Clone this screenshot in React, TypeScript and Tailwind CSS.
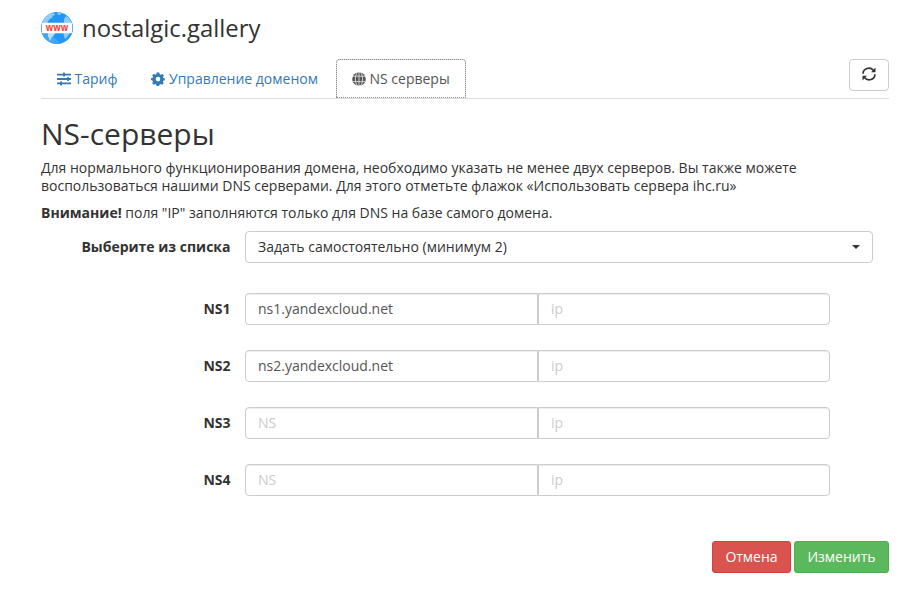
import type { ReactNode } from "react";

const servers = [
  { label: "NS1", value: "ns1.yandexcloud.net" },
  { label: "NS2", value: "ns2.yandexcloud.net" },
  { label: "NS3", value: "" },
  { label: "NS4", value: "" },
];

function WwwLogo() {
  return (
    <svg viewBox="0 0 32 32" className="h-8 w-8 shrink-0">
      <defs>
        <clipPath id="globe">
          <circle cx="16" cy="16" r="16" />
        </clipPath>
      </defs>
      <g clipPath="url(#globe)">
        <rect width="32" height="32" fill="#2196f3" />
        <path d="M0 32V12L20 32Z" fill="#42a5f5" />
        <path d="M0 13 3 6l5-4 5-1 1 2-3 1 1 1-3 2-2 2-1 4Z" fill="#90caf9" />
        <path d="m17 0 4 1-2 2-3-1Z" fill="#90caf9" />
        <path d="m23 7 2-3 3 2 4 7H22l1-3Z" fill="#90caf9" />
        <path d="M7 20h6l1 2-3 3-2 4-2-5Z" fill="#bbdefb" />
        <path d="M22 20h7l-2 4-3 3-1-3Z" fill="#90caf9" />
        <path d="M0 13V20h1v-7ZM31 12v8h1v-8Z" fill="#64b5f6" />
      </g>
      <rect x="1" y="10.8" width="30" height="10.4" rx="1" fill="#fff" />
      <text x="16" y="18.8" textAnchor="middle" textLength="22.5" lengthAdjust="spacingAndGlyphs" fontSize="10" fontWeight="700" fill="#f44336" fontFamily="'Open Sans', sans-serif">
        www
      </text>
    </svg>
  );
}

function SlidersIcon() {
  return (
    <svg viewBox="0 0 14 14" className="h-[14px] w-[14px]" fill="currentColor">
      <path d="M0 1.7h14v1.8H0zM0 6.1h14v1.8H0zM0 10.5h14v1.8H0z" />
      <rect x="6" y=".6" width="2" height="4" rx=".4" />
      <rect x="10" y="5" width="2" height="4" rx=".4" />
      <rect x="3" y="9.4" width="2" height="4" rx=".4" />
    </svg>
  );
}

function CogIcon() {
  return (
    <svg viewBox="0 0 14 14" className="h-[14px] w-[14px]" fill="currentColor">
      <path
        fillRule="evenodd"
        d="M5.7.4h2.6l.4 1.8 1 .5 1.7-.8 1.5 1.7-.9 1.6.3.8 1.5.3v1.9l-1.6.5-.4.9.9 1.6-1.6 1.6-1.6-.8-.9.4-.5 1.8H5.7l-.5-1.8-.9-.4-1.6.8-1.5-1.6.8-1.6-.4-.9L0 8V6.2l1.6-.4.4-1-.8-1.5 1.5-1.5 1.6.9.9-.5ZM7 4.8a2.3 2.3 0 1 0 0 4.6 2.3 2.3 0 0 0 0-4.6Z"
      />
    </svg>
  );
}

function GlobeIcon() {
  return (
    <svg viewBox="0 0 14 14" className="h-[14px] w-[14px]">
      <circle cx="7" cy="7" r="6.8" fill="currentColor" />
      <g fill="none" stroke="#fff" strokeWidth=".7">
        <path d="M1 4.2h12M1 9.6h12M7 0v14" />
        <ellipse cx="7" cy="7" rx="3.6" ry="7.4" />
      </g>
    </svg>
  );
}

function RefreshIcon() {
  return (
    <svg viewBox="0 0 14 14" className="mb-[2px] h-[14px] w-[14px]">
      <g fill="none" stroke="currentColor" strokeWidth="1.7">
        <path d="M1.1 6.7A5.8 5.4 0 0 1 11.4 3.2" />
        <path d="M12.9 7.3A5.8 5.4 0 0 1 2.6 10.8" />
      </g>
      <path d="M13.5 .6v4.6H9ZM.5 13.4V8.8H5Z" fill="currentColor" />
    </svg>
  );
}

function Tab({ icon, active, children }: { icon: ReactNode; active?: boolean; children: ReactNode }) {
  return (
    <a
      className={
        "mr-[2px] flex h-[39px] items-center gap-[3.5px] rounded-t-[4px] border px-[15px] text-[14px] leading-5 " +
        (active
          ? "border-[#ddd] border-b-transparent bg-white text-[#555] outline-1 -outline-offset-1 outline-dotted outline-[#888]"
          : "border-transparent text-[#337ab7]")
      }
    >
      {icon}
      <span className="whitespace-nowrap">{children}</span>
    </a>
  );
}

export default function App() {
  return (
    <main className="h-[607px] overflow-hidden bg-white pl-[41px] pr-4 pt-3 font-['Open_Sans','Noto_Sans',sans-serif] text-[14px] leading-[18px] text-[#333]">
      <header className="flex h-8 items-center gap-[9px]">
        <WwwLogo />
        <span className="text-[23.9px] leading-8">nostalgic.gallery</span>
      </header>

      <nav className="mt-[15px] flex h-10 items-end justify-between border-b border-[#ddd]">
        <div className="flex">
          <Tab icon={<SlidersIcon />}>Тариф</Tab>
          <Tab icon={<CogIcon />}>Управление доменом</Tab>
          <Tab active icon={<GlobeIcon />}>NS серверы</Tab>
        </div>
        <button className="mb-[7px] flex h-8 w-10 items-center justify-center rounded-[4px] border border-[#ccc] bg-white">
          <RefreshIcon />
        </button>
      </nav>

      <h1 className="mt-[18px] text-[30px] leading-[33px]">NS-серверы</h1>
      <p className="mt-[9px] w-[800px]">
        Для нормального функционирования домена, необходимо указать не менее двух серверов. Вы также можете
        <br />
        воспользоваться нашими DNS серверами. Для этого отметьте флажок «Использовать сервера ihc.ru»
      </p>
      <p className="mt-[9px]">
        <b>Внимание!</b> поля "IP" заполняются только для DNS на базе самого домена.
      </p>

      <div className="mt-[9px] flex items-center">
        <b className="w-[189.5px] text-right">Выберите из списка</b>
        <button className="ml-[14.5px] flex h-8 w-[628px] items-center justify-between rounded-[4px] border border-[#ccc] px-3 text-left">
          <span>Задать самостоятельно (минимум 2)</span>
          <span className="border-x-4 border-t-4 border-x-transparent border-t-[#333]" />
        </button>
      </div>

      <div className="mt-[30px] flex flex-col gap-[25px]">
        {servers.map((s) => (
          <div key={s.label} className="flex h-8 items-center">
            <b className="w-[189.5px] text-right">{s.label}</b>
            <input
              defaultValue={s.value}
              placeholder="NS"
              className="ml-[14.5px] h-8 w-[293px] rounded-l-[4px] border border-[#ccc] px-3 pb-[2px] text-[#555] shadow-[inset_0_1px_1px_rgba(0,0,0,0.075)] placeholder:text-[#ccc]"
            />
            <input
              placeholder="ip"
              className="h-8 w-[292px] rounded-r-[4px] border border-[#ccc] px-3 pb-[2px] text-[#555] shadow-[inset_0_1px_1px_rgba(0,0,0,0.075)] placeholder:text-[#ccc]"
            />
          </div>
        ))}
      </div>

      <footer className="mt-[45px] flex justify-end gap-[3px] text-[14px] leading-5 text-white">
        <button className="h-8 w-[79px] rounded-[3px] border border-[#d43f3a] bg-[#d9534f]">Отмена</button>
        <button className="h-8 w-[95px] rounded-[3px] border border-[#4cae4c] bg-[#5cb85c]">Изменить</button>
      </footer>
    </main>
  );
}
